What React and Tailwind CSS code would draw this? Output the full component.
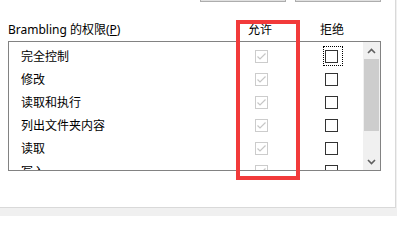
import React from "react";

const rows = ["完全控制", "修改", "读取和执行", "列出文件夹内容", "读取", "写入"];

const GreyCheck = () => (
  <span className="block w-[13px] h-[13px] border border-[#cccccc] bg-white">
    <svg width="11" height="11" viewBox="0 0 11 11" className="block">
      <polyline points="1.5,5.5 4,8 9.5,2.5" fill="none" stroke="#c6c6c6" strokeWidth="1.2" />
    </svg>
  </span>
);

const Box = ({ focused }) => (
  <span className="relative block w-[13px] h-[13px] border border-[#333333] bg-white">
    {focused && (
      <span className="absolute left-[-3px] top-[-5px] w-[20px] h-[20px] border border-dotted border-black" />
    )}
  </span>
);

const Chevron = ({ down }) => (
  <svg width="9" height="6" viewBox="0 0 9 6" className="block">
    <polyline
      points={down ? "1,1 4.5,4.5 8,1" : "1,5 4.5,1.5 8,5"}
      fill="none"
      stroke="#606060"
      strokeWidth="1.6"
    />
  </svg>
);

const App = () => {
  return (
    <div
      className="w-[397px] h-[216px] bg-[#f0f0f0] overflow-hidden text-black"
      style={{ fontFamily: '"Noto Sans", "Noto Sans CJK SC", sans-serif' }}
    >
      <div className="relative w-[396px] h-[208px] bg-white border-r border-b border-[#d9d9d9]">
        <div className="flex h-[2px] ml-[200px] gap-[9px]">
          <div className="w-[86px] border-x border-b border-[#adadad] bg-[#e1e1e1]" />
          <div className="w-[86px] border-x border-b border-[#adadad] bg-[#e1e1e1]" />
        </div>

        <div className="flex mt-[20px] pl-[8px] text-[12px] leading-[16px]">
          <span className="w-[240px]">
            Brambling 的权限(<span className="underline">P</span>)
          </span>
          <span className="w-[72px]">允许</span>
          <span>拒绝</span>
        </div>

        <div className="flex mt-[3px] ml-[8px] w-[373px] h-[130px] border border-[#828282]">
          <div className="flex-1 overflow-hidden pt-[3px]">
            {rows.map((r, i) => (
              <div key={r} className="flex items-center h-[23px] pl-[12px] text-[12px]">
                <span className="w-[234px]">{r}</span>
                <GreyCheck />
                <span className="w-[57px]" />
                <Box focused={i === 0} />
              </div>
            ))}
          </div>
          <div className="w-[17px] flex flex-col bg-[#f0f0f0]">
            <div className="h-[17px] flex items-center justify-center">
              <Chevron />
            </div>
            <div className="h-[72px] bg-[#cdcdcd] mx-[1px]" />
            <div className="flex-1" />
            <div className="h-[17px] flex items-center justify-center">
              <Chevron down />
            </div>
          </div>
        </div>

        <div className="absolute left-[236px] top-[20px] w-[64px] h-[160px] border-[4px] border-[#f23a3a]" />
      </div>
    </div>
  );
};

export default App;
